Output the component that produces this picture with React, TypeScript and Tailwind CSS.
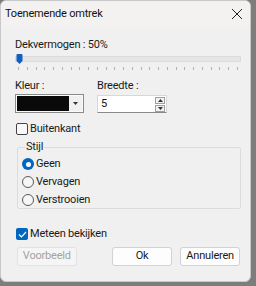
import React from "react";

const font = { fontFamily: 'Roboto, "Noto Sans", sans-serif', letterSpacing: "-0.2px" };

function Radio({ checked, label }: { checked?: boolean; label: string }) {
  return (
    <div className="flex items-center h-[18px]">
      {checked ? (
        <span className="w-[12px] h-[12px] rounded-full bg-[#0067c0] flex items-center justify-center">
          <span className="w-[5px] h-[5px] rounded-full bg-white" />
        </span>
      ) : (
        <span className="w-[12px] h-[12px] rounded-full border border-[#5a5a5a] bg-[#f6f6f6]" />
      )}
      <span className="ml-[2px] text-[11px] text-[#1a1a1a]">{label}</span>
    </div>
  );
}

export default function App() {
  const ticks = Array.from({ length: 26 }, (_, i) => i);
  return (
    <div className="w-[256px] h-[286px] bg-[#7d7d7d]" style={font}>
      <div className="w-[251px] h-[282px] bg-[#f0f0f0] rounded-[6px] border border-[#c8c8c8] overflow-hidden flex flex-col">
        <div className="h-[26px] bg-[#f4f1f1] flex items-center justify-between pl-[4px] pr-[7px] shrink-0">
          <span className="text-[11px] text-[#111]">Toenemende omtrek</span>
          <svg width="12" height="12" viewBox="0 0 12 12">
            <path d="M1 1 L11 11 M11 1 L1 11" stroke="#222" strokeWidth="1" />
          </svg>
        </div>
        <div className="pl-[14px] pr-[10px] flex flex-col">
          <div className="mt-[10px] h-[16px] text-[11px] leading-[16px] text-[#1a1a1a]">Dekvermogen : 50%</div>
          <div className="relative mt-[1px] h-[10px] w-[226px]">
            <div className="absolute left-0 right-0 top-[2px] h-[6px] bg-[#e5e5e5] border border-[#dcdcdc]" />
            <svg className="absolute left-[1px] top-0" width="7" height="10" viewBox="0 0 7 10">
              <path d="M0.5 1 Q0.5 0 1.5 0 L5.5 0 Q6.5 0 6.5 1 L6.5 7 L3.5 10 L0.5 7 Z" fill="#1060c0" />
            </svg>
          </div>
          <div className="mt-[3px] h-[3px] w-[226px] flex justify-between px-[3px]">
            {ticks.map((t) => (
              <span key={t} className="w-[1px] h-[3px] bg-[#b0b0b0]" />
            ))}
          </div>
          <div className="mt-[8px] flex">
            <div className="flex flex-col w-[82px]">
              <span className="h-[15px] text-[11px] leading-[15px] text-[#1a1a1a]">Kleur :</span>
              <div className="mt-[1px] w-[69px] h-[19px] border border-[#8a8a8a] bg-[#fafafa] flex p-[1px]">
                <div className="flex-1 bg-[#0a0a0a]" />
                <div className="w-[13px] flex items-center justify-center bg-[#f0f0f0]">
                  <svg width="5" height="3" viewBox="0 0 5 3"><path d="M0 0 L5 0 L2.5 3 Z" fill="#333" /></svg>
                </div>
              </div>
            </div>
            <div className="flex flex-col">
              <span className="h-[15px] text-[11px] leading-[15px] text-[#1a1a1a]">Breedte :</span>
              <div className="mt-[2px] w-[70px] h-[18px] bg-white border border-[#d8d8d8] border-b-[#8a8a8a] flex items-center">
                <span className="ml-[3px] flex-1 text-[11px] leading-[16px] text-[#111]">5</span>
                <div className="flex flex-col gap-[1px] mr-[1px]">
                  <div className="w-[10px] h-[7px] border border-[#a0a0a0] bg-[#f2f2f2] flex items-center justify-center">
                    <svg width="5" height="3" viewBox="0 0 5 3"><path d="M0 3 L5 3 L2.5 0 Z" fill="#333" /></svg>
                  </div>
                  <div className="w-[10px] h-[7px] border border-[#a0a0a0] bg-[#f2f2f2] flex items-center justify-center">
                    <svg width="5" height="3" viewBox="0 0 5 3"><path d="M0 0 L5 0 L2.5 3 Z" fill="#333" /></svg>
                  </div>
                </div>
              </div>
            </div>
          </div>
          <div className="mt-[9px] flex items-center h-[14px]">
            <span className="ml-[1px] w-[12px] h-[12px] rounded-[2px] border border-[#444] bg-[#f8f8f8]" />
            <span className="ml-[2px] text-[11px] text-[#1a1a1a]">Buitenkant</span>
          </div>
          <fieldset className="mt-[4px] ml-[2px] w-[224px] h-[69px] border border-[#dcdcdc] rounded-[2px] px-[4px] pb-0 pt-0">
            <legend className="ml-[3px] px-[1px] text-[11px] leading-[14px] text-[#1a1a1a]">Stijl</legend>
            <div className="flex flex-col mt-[1px]">
              <Radio checked label="Geen" />
              <Radio label="Vervagen" />
              <Radio label="Verstrooien" />
            </div>
          </fieldset>
          <div className="mt-[19px] flex items-center h-[12px]">
            <span className="ml-[1px] w-[12px] h-[12px] rounded-[2px] bg-[#0067c0] flex items-center justify-center">
              <svg width="9" height="7" viewBox="0 0 9 7"><path d="M1 3.5 L3.5 6 L8 1" stroke="white" strokeWidth="1.2" fill="none" /></svg>
            </span>
            <span className="ml-[2px] text-[11px] text-[#1a1a1a]">Meteen bekijken</span>
          </div>
          <div className="mt-[7px] flex">
            <div className="ml-[2px] w-[60px] h-[19px] rounded-[3px] bg-[#f5f5f5] border border-[#e2e2e2] flex items-center justify-center text-[11px] text-[#a2a2a2]">Voorbeeld</div>
            <div className="ml-[35px] w-[61px] h-[19px] rounded-[3px] bg-[#fdfdfd] border border-[#d2d2d2] flex items-center justify-center text-[11px] text-[#1a1a1a]">Ok</div>
            <div className="ml-[8px] w-[60px] h-[19px] rounded-[3px] bg-[#fdfdfd] border border-[#d2d2d2] flex items-center justify-center text-[11px] text-[#1a1a1a]">Annuleren</div>
          </div>
        </div>
      </div>
    </div>
  );
}
